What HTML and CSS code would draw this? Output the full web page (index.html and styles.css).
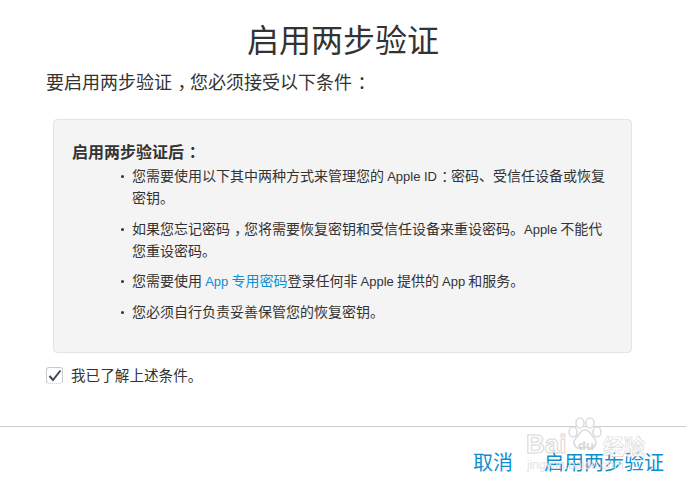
FILE: index.html
```html
<!DOCTYPE html>
<html lang="zh-CN">
<head>
<meta charset="utf-8">
<title>启用两步验证</title>
<link rel="stylesheet" href="styles.css">
</head>
<body>
<main class="content">
  <h1 class="title">启用两步验证</h1>
  <p class="intro">要启用两步验证<span class="cp">，</span>您必须接受以下条件<span class="cp">：</span></p>
  <section class="panel">
    <h2 class="panel-title">启用两步验证后<span class="cp">：</span></h2>
    <ul class="terms">
      <li>您需要使用以下其中两种方式来管理您的 <span class="lat">Apple ID</span><span class="cp">：</span>密码、受信任设备或恢复密钥。</li>
      <li>如果您忘记密码<span class="cp">，</span>您将需要恢复密钥和受信任设备来重设密码。<span class="lat">Apple</span> 不能代您重设密码。</li>
      <li>您需要使用 <a class="link" href="#"><span class="lat">App</span> 专用密码</a>登录任何非 <span class="lat">Apple</span> 提供的 <span class="lat">App</span> 和服务。</li>
      <li>您必须自行负责妥善保管您的恢复密钥。</li>
    </ul>
  </section>
  <label class="agree">
    <span class="box">
      <svg width="14" height="13" viewBox="0 0 14 13"><path d="M1.5 7 L5 11 L12.5 1.5" fill="none" stroke="#3d4654" stroke-width="2"/></svg>
    </span>
    <span>我已了解上述条件。</span>
  </label>
</main>
<footer class="footer">
  <a class="action" href="#">取消</a>
  <a class="action" href="#">启用两步验证</a>
  <div class="watermark" aria-hidden="true">
    <svg class="paw" width="36" height="34" viewBox="0 0 36 34"><g fill="#fff" stroke="#dcdcdc" stroke-width="1.6"><ellipse cx="6" cy="15" rx="4" ry="5"/><ellipse cx="13" cy="6" rx="4" ry="5"/><ellipse cx="23" cy="6" rx="4" ry="5"/><ellipse cx="30" cy="15" rx="4" ry="5"/><path d="M18 13c-5 0-6 5-9 8-4 4-1 11 4 10 3-1 7-1 10 0 5 1 8-6 4-10-3-3-4-8-9-8z"/></g></svg>
    <span class="wm-bai">Bai</span><span class="wm-du">du</span><span class="wm-jy">经验</span>
    <span class="wm-url">jingyan.baidu.com</span>
  </div>
</footer>
</body>
</html>
```
FILE: styles.css
```css
* { box-sizing: border-box; }
html, body { margin: 0; padding: 0; }
body {
  width: 686px;
  height: 489px;
  overflow: hidden;
  background: #fff;
  color: #333;
  font-family: "Noto Sans CJK SC", "Liberation Sans", sans-serif;
}
.content { padding: 0 54px 0 46px; height: 426px; }
.title {
  margin: 0 -54px 0 -46px;
  padding-top: 15px;
  height: 67px;
  font-size: 32px;
  line-height: 46px;
  font-weight: 400;
  text-align: center;
}
.intro { margin: 0; font-size: 18px; line-height: 28px; font-weight: 400; }
.cp { font-feature-settings: "halt"; padding: 0 .2em 0 .3em; line-height: 1; }
.lat { font-family: "Liberation Sans", sans-serif; font-size: 13px; line-height: 1; }
.panel {
  margin: 24px 0 0 7px;
  width: 579px;
  height: 234px;
  padding: 20px 18px 0;
  background: #f4f4f4;
  border: 1px solid #e4e4e4;
  border-radius: 4px;
}
.panel-title { margin: 0; font-size: 16px; line-height: 22px; font-weight: 700; }
.terms { margin: 2px 0 0; padding: 0 0 0 60px; list-style: none; font-size: 14px; line-height: 22px; }
.terms li { position: relative; margin-bottom: 8.5px; }
.terms li::before {
  content: "";
  position: absolute;
  left: -11px;
  top: 11px;
  width: 3px;
  height: 3px;
  border-radius: 50%;
  background: #333;
}
.link { color: #0f8ed0; text-decoration: none; }
.agree { display: flex; align-items: center; gap: 8px; margin-top: 12px; font-size: 14.6px; line-height: 20px; }
.box {
  width: 17px;
  height: 17px;
  display: flex;
  align-items: center;
  justify-content: center;
  background: #fff;
  border: 1px solid #c9c9c9;
  border-bottom-style: dotted;
  border-radius: 3px;
}
.footer {
  position: relative;
  height: 63px;
  border-top: 1px solid #ccc;
  display: flex;
  justify-content: flex-end;
  align-items: flex-start;
  gap: 31px;
  padding: 21px 22px 0 0;
}
.action { color: #0f8ed0; text-decoration: none; font-size: 20px; line-height: 28px; font-weight: 400; }
.watermark { position: absolute; left: 525px; top: 0; width: 150px; height: 60px; color: #fff; }
.paw { position: absolute; left: 42px; top: -10px; }
.wm-bai { position: absolute; left: 1px; top: 2px; font: 700 26px/30px "Liberation Sans", sans-serif; -webkit-text-stroke: 1px #d8d8d8; }
.wm-du { position: absolute; left: 53px; top: 11px; font: 700 13px/16px "Liberation Sans", sans-serif; color: #d8d8d8; }
.wm-jy { position: absolute; left: 78px; top: 4px; font: 700 21px/28px "Noto Sans CJK SC", sans-serif; -webkit-text-stroke: .6px #d8d8d8; }
.wm-url { position: absolute; left: 2px; top: 31px; font: 12px/14px "Liberation Sans", sans-serif; color: #e4e4e4; }
```
